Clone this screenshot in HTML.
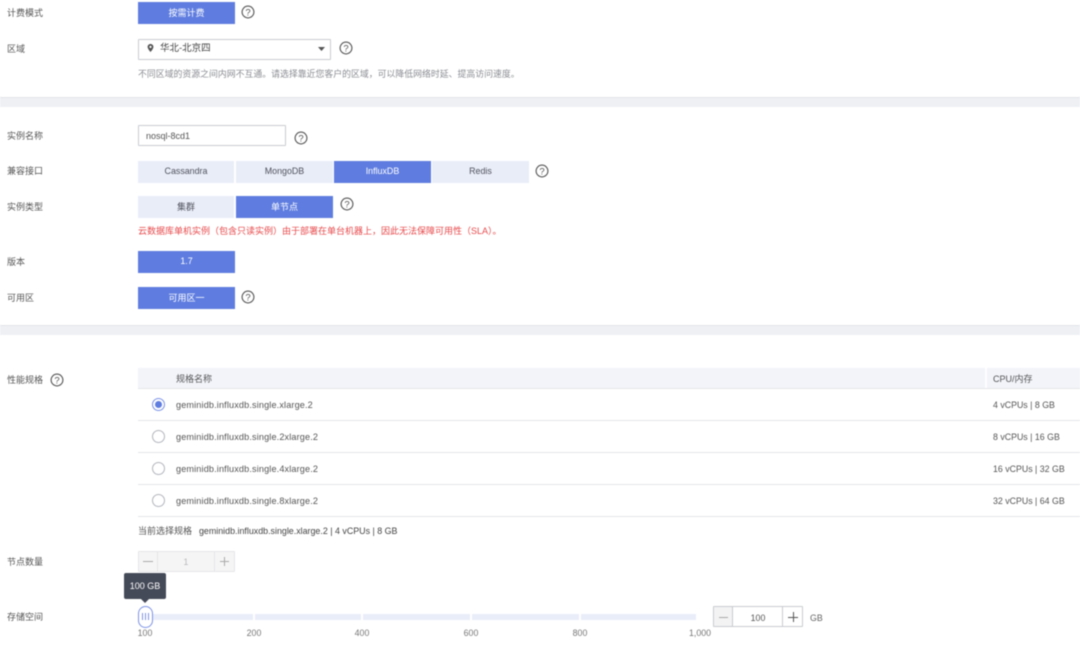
<!DOCTYPE html>
<html><head><meta charset="utf-8">
<style>
html,body{margin:0;padding:0;background:#fff}
#p{position:relative;width:1080px;height:648px;overflow:hidden;background:#fff;font-family:"Liberation Sans","Noto Sans CJK SC",sans-serif;font-size:9px;color:#50535c;filter:blur(.45px)}
#p div{position:absolute;box-sizing:border-box;white-space:nowrap}
.l{left:7px;line-height:14px;height:14px;font-size:9px;color:#555}
.b{height:22px;line-height:22px;text-align:center;background:#e9edf8;color:#50535c;font-size:9px}
.e{font-size:8.9px;line-height:21.5px}
.a{background:#5f7de0;color:#fff}
.band{left:0;width:1080px;height:10px;background:#eff0f4;border-top:1px solid #e3e4e8}
.r{left:138px;width:942px;height:1px;background:#e4e5e8}
.t{left:176px;line-height:14px;height:14px;font-size:9.1px;letter-spacing:.15px;color:#555}
.c{left:993px;line-height:14px;height:14px;font-size:8.8px;color:#555}
.h{font-size:9px;top:372px;letter-spacing:0}
.rd{left:152px;width:13px;height:13px;border-radius:50%;border:1px solid #b4b6bc;background:#fff}
svg{position:absolute;display:block}
.n{line-height:14px;height:14px;font-size:8.8px;color:#777;text-align:center}
.s{top:614px;height:6px;background:#e9edf9}
</style></head><body><div id="p">

<div class="l" style="top:6px">计费模式</div>
<div class="b a" style="left:138px;top:2px;width:97px">按需计费</div>
<svg style="left:241px;top:5px" width="14" height="14" viewBox="0 0 14 14"><circle cx="7" cy="7" r="5.9" fill="none" stroke="#555" stroke-width="1.1"/><text x="7" y="10.3" font-size="9.5" text-anchor="middle" fill="#555" font-family="Liberation Sans">?</text></svg>

<div class="l" style="top:42px">区域</div>
<div style="left:138px;top:39px;width:193px;height:21px;border:1px solid #c9cbd0;border-radius:1px;background:#fff"></div>
<svg style="left:146px;top:43px" width="9" height="11" viewBox="0 0 9 11"><path d="M4.5 1C2.8 1 1.6 2.3 1.6 3.9 1.6 6 4.5 9 4.5 9S7.4 6 7.4 3.9C7.4 2.3 6.2 1 4.5 1Z" fill="#555"/><circle cx="4.5" cy="3.9" r="1.1" fill="#fff"/></svg>
<div style="left:160px;top:42px;line-height:14px;font-size:9.5px;color:#444">华北-北京四</div>
<svg style="left:317px;top:46px" width="9" height="6" viewBox="0 0 9 6"><path d="M1 1H8L4.5 5Z" fill="#555"/></svg>
<svg style="left:339px;top:41px" width="14" height="14" viewBox="0 0 14 14"><circle cx="7" cy="7" r="5.9" fill="none" stroke="#555" stroke-width="1.1"/><text x="7" y="10.3" font-size="9.5" text-anchor="middle" fill="#555" font-family="Liberation Sans">?</text></svg>
<div style="left:138px;top:67px;line-height:14px;font-size:8.9px;color:#8a8c92">不同区域的资源之间内网不互通。请选择靠近您客户的区域，可以降低网络时延、提高访问速度。</div>

<div class="band" style="top:97px"></div>

<div class="l" style="top:129px">实例名称</div>
<div style="left:138px;top:125px;width:148px;height:21px;border:1px solid #c9cbd0;border-radius:1px;line-height:20px;padding-left:7px;font-size:9px;color:#555">nosql-8cd1</div>
<svg style="left:294px;top:131px" width="14" height="14" viewBox="0 0 14 14"><circle cx="7" cy="7" r="5.9" fill="none" stroke="#555" stroke-width="1.1"/><text x="7" y="10.3" font-size="9.5" text-anchor="middle" fill="#555" font-family="Liberation Sans">?</text></svg>

<div class="l" style="top:164px">兼容接口</div>
<div class="b e" style="left:138px;top:161px;width:96px">Cassandra</div>
<div class="b e" style="left:236px;top:161px;width:97px">MongoDB</div>
<div class="b a e" style="left:334px;top:161px;width:97px">InfluxDB</div>
<div class="b e" style="left:432px;top:161px;width:97px">Redis</div>
<svg style="left:535px;top:164px" width="14" height="14" viewBox="0 0 14 14"><circle cx="7" cy="7" r="5.9" fill="none" stroke="#555" stroke-width="1.1"/><text x="7" y="10.3" font-size="9.5" text-anchor="middle" fill="#555" font-family="Liberation Sans">?</text></svg>

<div class="l" style="top:200px">实例类型</div>
<div class="b" style="left:138px;top:196px;width:96px">集群</div>
<div class="b a" style="left:236px;top:196px;width:97px">单节点</div>
<svg style="left:340px;top:197px" width="14" height="14" viewBox="0 0 14 14"><circle cx="7" cy="7" r="5.9" fill="none" stroke="#555" stroke-width="1.1"/><text x="7" y="10.3" font-size="9.5" text-anchor="middle" fill="#555" font-family="Liberation Sans">?</text></svg>
<div style="left:138px;top:224px;line-height:14px;font-size:9px;color:#e8494b">云数据库单机实例（包含只读实例）由于部署在单台机器上，因此无法保障可用性（SLA）。</div>

<div class="l" style="top:255px">版本</div>
<div class="b a e" style="left:138px;top:251px;width:97px">1.7</div>

<div class="l" style="top:291px">可用区</div>
<div class="b a" style="left:138px;top:287px;width:97px">可用区一</div>
<svg style="left:241px;top:290px" width="14" height="14" viewBox="0 0 14 14"><circle cx="7" cy="7" r="5.9" fill="none" stroke="#555" stroke-width="1.1"/><text x="7" y="10.3" font-size="9.5" text-anchor="middle" fill="#555" font-family="Liberation Sans">?</text></svg>

<div class="band" style="top:325px"></div>

<div class="l" style="top:373px">性能规格</div>
<svg style="left:50px;top:373px" width="14" height="14" viewBox="0 0 14 14"><circle cx="7" cy="7" r="5.9" fill="none" stroke="#555" stroke-width="1.1"/><text x="7" y="10.3" font-size="9.5" text-anchor="middle" fill="#555" font-family="Liberation Sans">?</text></svg>

<div style="left:138px;top:368px;width:942px;height:20px;background:#f2f4fa"></div>
<div style="left:985px;top:368px;width:2px;height:20px;background:#fff"></div>
<div class="r" style="top:388px"></div>
<div class="t h">规格名称</div>
<div class="c h">CPU/内存</div>

<div class="rd" style="top:398px;border-color:#7d93e6"></div>
<div style="left:155px;top:401px;width:7px;height:7px;border-radius:50%;background:#5f7de0"></div>
<div class="t" style="top:398px">geminidb.influxdb.single.xlarge.2</div>
<div class="c" style="top:398px">4 vCPUs | 8 GB</div>
<div class="r" style="top:420px"></div>

<div class="rd" style="top:430px"></div>
<div class="t" style="top:430px">geminidb.influxdb.single.2xlarge.2</div>
<div class="c" style="top:430px">8 vCPUs | 16 GB</div>
<div class="r" style="top:452px"></div>

<div class="rd" style="top:462px"></div>
<div class="t" style="top:462px">geminidb.influxdb.single.4xlarge.2</div>
<div class="c" style="top:462px">16 vCPUs | 32 GB</div>
<div class="r" style="top:484px"></div>

<div class="rd" style="top:494px"></div>
<div class="t" style="top:494px">geminidb.influxdb.single.8xlarge.2</div>
<div class="c" style="top:494px">32 vCPUs | 64 GB</div>
<div class="r" style="top:516px"></div>

<div style="left:138px;top:524px;line-height:14px;font-size:9px;color:#555">当前选择规格</div>
<div style="left:199px;top:524px;line-height:14px;font-size:8.9px;color:#444">geminidb.influxdb.single.xlarge.2 | 4 vCPUs | 8 GB</div>

<div class="l" style="top:555px">节点数量</div>
<div style="left:138px;top:551px;width:97px;height:21px;background:#f5f5f6;border:1px solid #e6e6e8;border-radius:1px"></div>
<div style="left:157px;top:552px;width:1px;height:19px;background:#e6e6e8"></div>
<div style="left:214px;top:552px;width:1px;height:19px;background:#e6e6e8"></div>
<div style="left:143px;top:561px;width:10px;height:1px;background:#aaa"></div>
<div style="left:220px;top:561px;width:9px;height:1px;background:#aaa"></div>
<div style="left:224px;top:557px;width:1px;height:9px;background:#aaa"></div>
<div class="n" style="left:176px;top:555px;width:20px;color:#bbb">1</div>

<div style="left:124px;top:573px;width:42px;height:26px;background:#454a58;border-radius:2px;color:#fff;font-size:9px;line-height:26px;text-align:center">100 GB</div>
<div style="left:141px;top:599px;width:0;height:0;border-left:4px solid transparent;border-right:4px solid transparent;border-top:4px solid #454a58"></div>

<div class="l" style="top:610px">存储空间</div>
<div class="s" style="left:145px;width:108px"></div>
<div class="s" style="left:255px;width:106px"></div>
<div class="s" style="left:363px;width:107px"></div>
<div class="s" style="left:472px;width:107px"></div>
<div class="s" style="left:581px;width:115px"></div>
<div style="left:138px;top:606px;width:15px;height:22px;border-radius:8px;border:1px solid #7d93e6;background:#fff"></div>
<div style="left:142px;top:613px;width:1px;height:7px;background:#7d93e6"></div>
<div style="left:145px;top:613px;width:1px;height:7px;background:#7d93e6"></div>
<div style="left:148px;top:613px;width:1px;height:7px;background:#7d93e6"></div>
<div class="n" style="left:130px;top:626px;width:30px">100</div>
<div class="n" style="left:239px;top:626px;width:30px">200</div>
<div class="n" style="left:347px;top:626px;width:30px">400</div>
<div class="n" style="left:456px;top:626px;width:30px">600</div>
<div class="n" style="left:565px;top:626px;width:30px">800</div>
<div class="n" style="left:682px;top:626px;width:36px">1,000</div>

<div style="left:713px;top:606px;width:90px;height:21px;background:#fff;border:1px solid #c9cbd0;border-radius:1px"></div>
<div style="left:714px;top:607px;width:19px;height:19px;background:#f3f3f4;border-right:1px solid #c9cbd0"></div>
<div style="left:782px;top:607px;width:1px;height:19px;background:#c9cbd0"></div>
<div style="left:719px;top:617px;width:9px;height:1px;background:#aaa"></div>
<div style="left:788px;top:617px;width:10px;height:1px;background:#555"></div>
<div style="left:793px;top:612px;width:1px;height:10px;background:#555"></div>
<div class="n" style="left:738px;top:611px;width:40px;color:#555">100</div>
<div style="left:810px;top:611px;line-height:14px;font-size:8.8px;color:#666">GB</div>

</div></body></html>
